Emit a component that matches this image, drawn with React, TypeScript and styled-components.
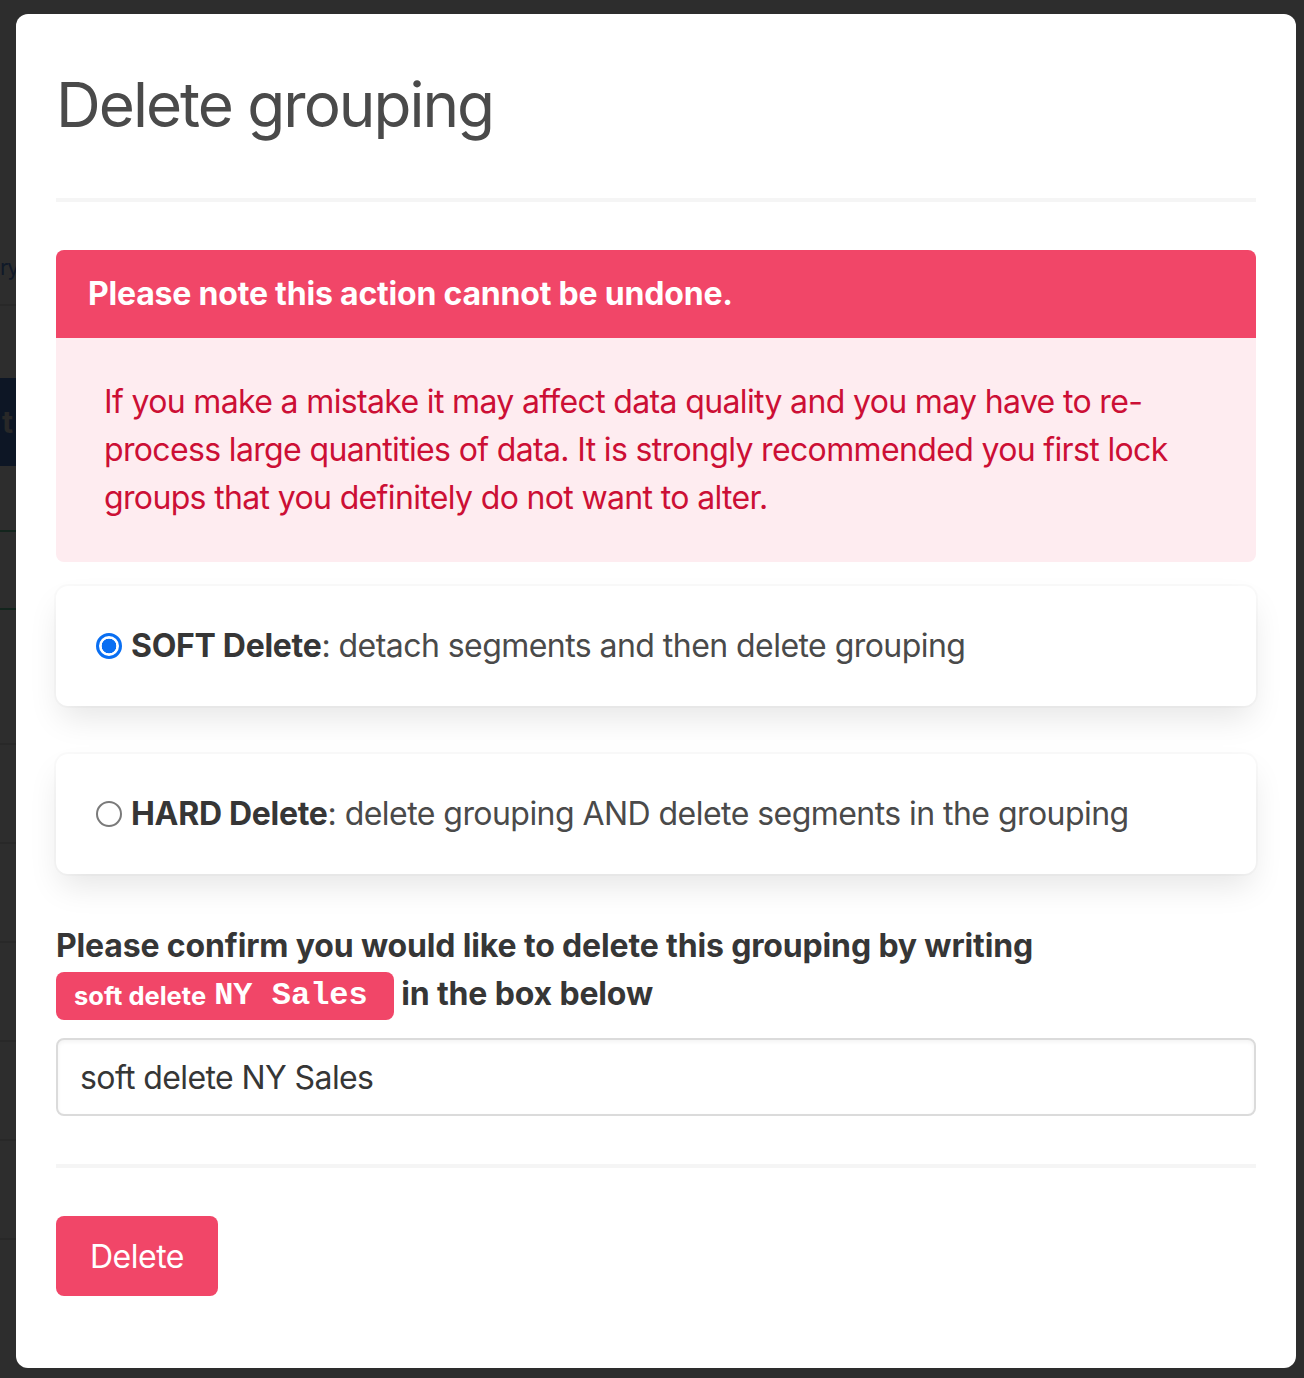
import React, { useState } from "react"
import styled, { createGlobalStyle } from "styled-components"

const GlobalStyle = createGlobalStyle`
    html, body {
        margin: 0;
        padding: 0;
    }
    body {
        font-family: Inter, "Noto Sans", sans-serif;
        background: #fff;
    }
    * {
        box-sizing: border-box;
    }
`

const CONFIRM = "soft delete NY Sales"
const tableRows = [0, 1, 2, 3, 4, 5]

const App = () => {
    const [mode, setMode] = useState<"soft" | "hard">("soft")
    const [value, setValue] = useState(CONFIRM)

    return (
        <Screen>
            <GlobalStyle />
            <Page>
                <PageHeading>ry</PageHeading>
                <PageBanner>t</PageBanner>
                <PageCard />
                <PageTable>
                    {tableRows.map(row => (
                        <PageRow key={row} />
                    ))}
                </PageTable>
            </Page>

            <Backdrop>
                <Modal>
                    <Title>Delete grouping</Title>
                    <Rule />

                    <Message>
                        <MessageHeader>
                            Please note this action cannot be undone.
                        </MessageHeader>
                        <MessageBody>
                            If you make a mistake it may affect data quality and
                            you may have to re-process large quantities of data.
                            It is strongly recommended you first lock groups
                            that you definitely do not want to alter.
                        </MessageBody>
                    </Message>

                    <Choice>
                        <ChoiceLabel>
                            <Radio
                                name="mode"
                                checked={mode == "soft"}
                                onChange={() => setMode("soft")}
                            />
                            <span>
                                <strong>SOFT Delete</strong>: detach segments
                                and then delete grouping
                            </span>
                        </ChoiceLabel>
                    </Choice>

                    <Choice>
                        <ChoiceLabel>
                            <Radio
                                name="mode"
                                checked={mode == "hard"}
                                onChange={() => setMode("hard")}
                            />
                            <span>
                                <strong>HARD Delete</strong>: delete grouping
                                AND delete segments in the grouping
                            </span>
                        </ChoiceLabel>
                    </Choice>

                    <ConfirmLabel>
                        Please confirm you would like to delete this grouping by
                        writing{" "}
                        <Tag>
                            {mode} delete <TagCode>NY Sales</TagCode>
                        </Tag>{" "}
                        in the box below
                    </ConfirmLabel>
                    <Input
                        value={value}
                        onChange={e => setValue(e.target.value)}
                    />

                    <Rule />

                    <DangerButton disabled={value !== CONFIRM}>Delete</DangerButton>
                </Modal>
            </Backdrop>
        </Screen>
    )
}

export default App

const Screen = styled.div`
    position: relative;
    width: 100%;
    min-height: 1378px;
    overflow: hidden;
    background: #fff;
`

/* the page under the modal, only its left edge shows */
const Page = styled.div`
    display: flex;
    flex-direction: column;
    padding-top: 230px;
`

const PageHeading = styled.div`
    display: flex;
    align-items: center;
    width: 16px;
    height: 76px;
    border-bottom: 2px solid #dbdbdb;
    color: #3273dc;
    font-size: 22px;
    letter-spacing: -1.5px;
    white-space: nowrap;
`

const PageBanner = styled.div`
    display: flex;
    align-items: center;
    margin-top: 72px;
    height: 88px;
    width: 16px;
    padding-left: 2px;
    background: #2160c4;
    color: #d8d8d8;
    font-size: 30px;
    font-weight: 700;
`

const PageCard = styled.div`
    margin: 64px 0 0 -20px;
    width: 40px;
    height: 80px;
    border: 2px solid #48c78e;
    border-right-width: 0;
    box-shadow: inset -15px 0 0 -13px #48c78e;
`

const PageTable = styled.div`
    display: flex;
    flex-direction: column;
    margin-top: 36px;
`

const PageRow = styled.div`
    height: 99px;
    width: 16px;
    border-bottom: 2px solid #dbdbdb;
`

const Backdrop = styled.div`
    position: absolute;
    inset: 0;
    display: flex;
    padding: 14px 8px 10px 16px;
    background: rgba(10, 10, 10, 0.86);
`

const Modal = styled.div`
    flex: 1;
    background: #fff;
    border-radius: 12px;
    padding: 40px 40px 70px;
    color: #4a4a4a;
`

const Title = styled.h1`
    margin: 0;
    padding-top: 3px;
    height: 96px;
    font-size: 62px;
    font-weight: 400;
    line-height: 96px;
    letter-spacing: -2px;
    color: #4a4a4a;
`

const Rule = styled.hr`
    display: block;
    height: 4px;
    margin: 48px 0;
    border: none;
    background: #f5f5f5;
`

const Message = styled.article`
    margin-bottom: 24px;
    border-radius: 8px;
    background: #feecf0;
    font-size: 32px;
    overflow: hidden;
`

const MessageHeader = styled.div`
    padding: 24px 32px;
    background: #f14668;
    color: #fff;
    font-weight: 700;
    line-height: 40px;
    letter-spacing: -0.2px;
`

const MessageBody = styled.div`
    padding: 40px 48px;
    color: #cc0f35;
    line-height: 48px;
    letter-spacing: -0.65px;
`

const Choice = styled.div`
    margin-bottom: 48px;
    padding: 40px;
    border-radius: 12px;
    background: #fff;
    box-shadow: 0 16px 32px -4px rgba(10, 10, 10, 0.1),
        0 0 0 2px rgba(10, 10, 10, 0.02);
`

const ChoiceLabel = styled.label`
    display: flex;
    align-items: center;
    font-size: 32px;
    line-height: 40px;
    letter-spacing: -0.55px;
    color: #4a4a4a;
    cursor: pointer;

    strong {
        color: #363636;
        font-weight: 700;
        letter-spacing: -0.3px;
    }
`

const Radio = styled.input.attrs({ type: "radio" })`
    appearance: none;
    flex: none;
    width: 26px;
    height: 26px;
    margin: 0 9px 0 0;
    border: 2px solid #7a7a7a;
    border-radius: 50%;
    background: #fff;

    &:checked {
        border: 3px solid #0a6ff2;
        background: radial-gradient(circle, #0a6ff2 0 7px, #fff 7.6px);
    }
`

const ConfirmLabel = styled.label`
    display: block;
    margin-bottom: 18px;
    font-size: 32px;
    font-weight: 700;
    line-height: 48px;
    letter-spacing: -0.15px;
    color: #363636;
`

const Tag = styled.span`
    display: inline-flex;
    align-items: center;
    height: 48px;
    padding: 0 26px 0 18px;
    border-radius: 8px;
    background: #f14668;
    color: #fff;
    font-size: 25.5px;
    font-weight: 700;
    letter-spacing: 0;
    vertical-align: middle;
    white-space: pre;
`

const TagCode = styled.code`
    font-family: "Courier New", "Liberation Mono", monospace;
    font-size: 32px;
    font-weight: 700;
    margin-left: 2px;
`

const Input = styled.input`
    display: block;
    width: 100%;
    height: 78px;
    padding: 0 22px;
    border: 2px solid #dbdbdb;
    border-radius: 8px;
    box-shadow: inset 0 2px 4px rgba(10, 10, 10, 0.05);
    font-family: inherit;
    font-size: 32px;
    letter-spacing: -0.6px;
    color: #363636;
    outline: none;
`

const DangerButton = styled.button`
    display: inline-flex;
    align-items: center;
    height: 80px;
    padding: 0 32px;
    border: 2px solid transparent;
    border-radius: 8px;
    background: #f14668;
    color: #fff;
    font-family: inherit;
    font-size: 32px;
    letter-spacing: -0.5px;
    cursor: pointer;
`
